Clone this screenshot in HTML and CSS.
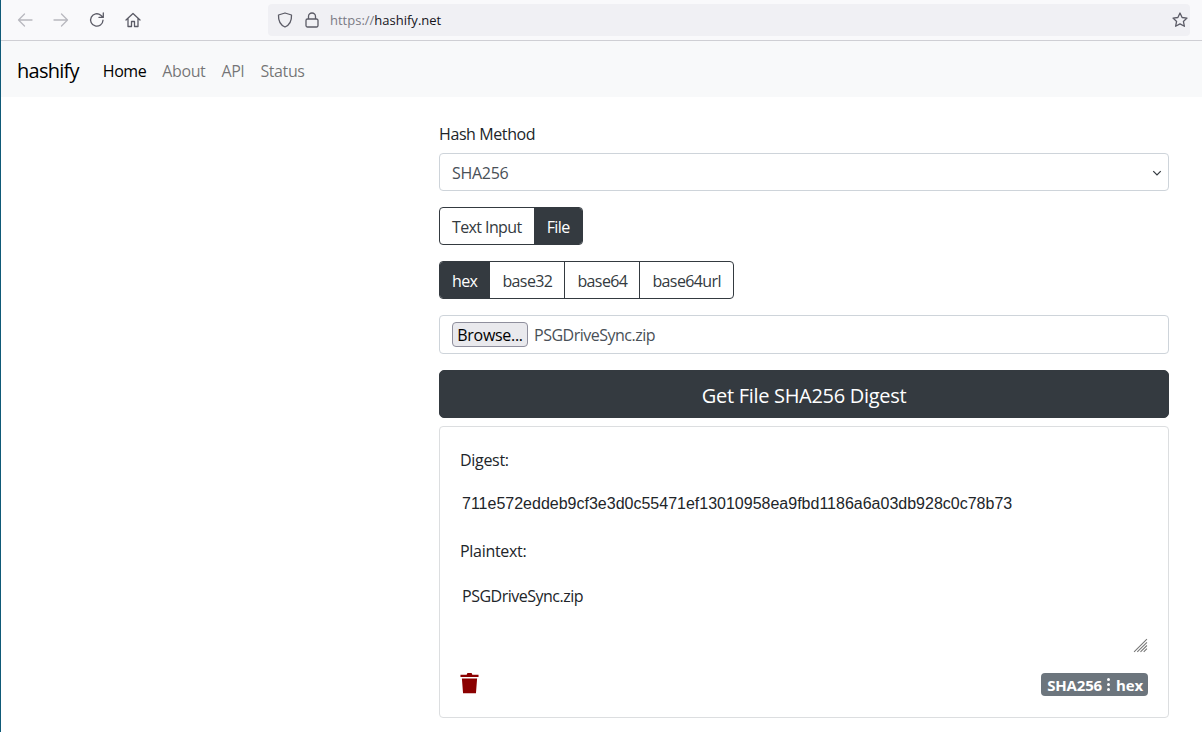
FILE: index.html
```html
<!DOCTYPE html>
<html lang="en">
<head>
<meta charset="utf-8">
<title>hashify</title>
<link rel="stylesheet" href="styles.css">
</head>
<body>
<div class="window">
  <div class="chrome">
    <div class="tools">
      <svg class="ico faint" viewBox="0 0 16 16"><path d="M15 8H1.5M7.5 2 1.5 8l6 6"/></svg>
      <svg class="ico faint" viewBox="0 0 16 16"><path d="M1 8h13.5M8.5 2l6 6-6 6"/></svg>
      <svg class="ico" viewBox="0 0 16 16"><path d="M14 8.2A6.2 6.2 0 1 1 11.8 3.2L14 5.2M14.3 1v4.4H10"/></svg>
      <svg class="ico" viewBox="0 0 16 16"><path d="M1 8 8 1.5 15 8M3 6.5V14.500h3.500V9.500h3V14.500H13V6.500"/></svg>
    </div>
    <div class="urlbar">
      <svg class="ico shield" viewBox="0 0 16 16"><path d="M8 1 14.500 3C14.800 9 12.500 13 8 15 3.500 13 1.200 9 1.500 3Z"/></svg>
      <svg class="ico lock" viewBox="0 0 16 16"><path d="M4.500 7V4.500a3.500 3.500 0 0 1 7 0V7M3.500 7h9a1.500 1.500 0 0 1 1.500 1.500v5a1.500 1.500 0 0 1-1.500 1.500h-9A1.500 1.500 0 0 1 2 13.500v-5A1.500 1.500 0 0 1 3.500 7Z"/></svg>
      <span class="url"><span class="scheme">https://</span>hashify.net</span>
      <svg class="ico star" viewBox="0 0 16 16"><path d="M8 1l2.100 4.500 4.900.6-3.600 3.300 1 4.900L8 11.900l-4.400 2.400 1-4.900L1 6.100l4.900-.6Z"/></svg>
    </div>
  </div>
  <nav class="navbar">
    <a class="brand">hashify</a>
    <a class="navlink active">Home</a>
    <a class="navlink">About</a>
    <a class="navlink">API</a>
    <a class="navlink">Status</a>
  </nav>
  <main class="main">
    <label class="label">Hash Method</label>
    <div class="select">
      <span>SHA256</span>
      <svg class="caret" viewBox="0 0 16 16"><path d="M2 5l6 6 6-6"/></svg>
    </div>
    <div class="btngroup">
      <span class="seg">Text Input</span><span class="seg on">File</span>
    </div>
    <div class="btngroup">
      <span class="seg on">hex</span><span class="seg">base32</span><span class="seg">base64</span><span class="seg">base64url</span>
    </div>
    <div class="filebox">
      <span class="browse">Browse...</span><span class="filename">PSGDriveSync.zip</span>
    </div>
    <button class="submit">Get File SHA256 Digest</button>
    <section class="card">
      <div class="cardlabel">Digest:</div>
      <div class="value digest">711e572eddeb9cf3e3d0c55471ef13010958ea9fbd1186a6a03db928c0c78b73</div>
      <div class="cardlabel second">Plaintext:</div>
      <div class="value plain">PSGDriveSync.zip</div>
      <div class="grip">
        <svg viewBox="0 0 14 14"><path d="M13 1 1 13M13 4 4 13M13 7 7 13M13 10 10 13"/></svg>
      </div>
      <div class="cardfoot">
        <svg class="trash" viewBox="0 0 20 22"><path d="M7 2.200 7.800.5h4.400L13 2.200h6.500v2.600H.5V2.200ZM2 6.300h16L16.800 21.800H3.200Z"/></svg>
        <span class="badge">SHA256<span class="dots"><i></i><i></i><i></i></span>hex</span>
      </div>
    </section>
  </main>
</div>
</body>
</html>
```

FILE: styles.css
```css
* { box-sizing: border-box; }
html, body { margin: 0; height: 100%; background: #fff; }
body { overflow: hidden; font-family: "Open Sans", "Noto Sans", sans-serif; font-size: 16px; line-height: 24px; color: #212529; }
.window { height: 732px; border-left: 1px solid #0f5a78; overflow: hidden; }
.chrome { height: 41px; background: #f9f9fb; border-bottom: 1px solid #cfcfd4; display: flex; align-items: flex-start; padding: 4px 0 0 16px; }
.tools { display: flex; gap: 20px; height: 32px; align-items: center; width: 251px; }
.ico { width: 16px; height: 16px; flex: none; fill: none; stroke: #5b5b66; stroke-width: 1.300; stroke-linejoin: round; stroke-linecap: round; }
.faint { stroke: #b8b8bf; }
.urlbar { width: 922px; height: 32px; background: #f0f0f4; border-radius: 4px; display: flex; align-items: center; padding: 0 2px 0 9px; }
.lock { margin-left: 11px; }
.url { margin-left: 10px; font-size: 13px; color: #15141a; font-family: "Open Sans", sans-serif; }
.scheme { color: #7b7b85; }
.star { margin-left: auto; }
.navbar { height: 56px; background: #f8f9fa; display: flex; align-items: center; padding: 3px 0 0 16px; }
.brand { font-size: 20px; line-height: 30px; color: #000; margin-right: 16px; letter-spacing: -0.750px; }
.navlink { padding: 0 8px; color: rgba(0,0,0,.55); letter-spacing: -0.400px; }
.navlink.active { color: #000; }
.main { width: 730px; margin-left: 438px; padding-top: 25px; }
.label { display: block; height: 24px; margin-bottom: 7px; letter-spacing: -0.400px; }
.select { height: 38px; border: 1px solid #ced4da; border-radius: 4px; padding: 7px 12px 5px; display: flex; justify-content: space-between; align-items: center; color: #495057; letter-spacing: -0.300px; }
.caret { width: 16px; height: 16px; margin-right: -9px; padding: 3px; fill: none; stroke: #343a40; stroke-width: 2; }
.btngroup { display: flex; height: 38px; margin-top: 16px; letter-spacing: -0.600px; width: max-content; border: 1px solid #343a40; border-radius: 4px; overflow: hidden; }
.seg { padding: 7px 12px 5px; border-left: 1px solid #343a40; color: #343a40; }
.seg:first-child { border-left: 0; }
.seg.on { background: #343a40; color: #fff; }
.filebox { height: 39px; margin-top: 16px; border: 1px solid #ced4da; border-radius: 4px; display: flex; align-items: center; padding-left: 12px; color: #495057; letter-spacing: -0.500px; }
.browse { height: 25px; line-height: 25px; width: 76px; text-align: center; background: #e9e9ed; border: 1px solid #8f8f9d; border-radius: 4px; color: #000; margin-right: 6px; letter-spacing: -0.300px; }
.filename { padding-top: 1px; }
.submit { display: block; width: 100%; height: 48px; margin-top: 16px; padding-top: 4px; border: 1px solid #343a40; border-radius: 5px; background: #343a40; color: #fff; font: inherit; font-size: 20px; line-height: 30px; letter-spacing: -0.300px; }
.card { height: 292px; margin-top: 8px; border: 1px solid #dcdee0; border-radius: 4px; padding: 21px 20px 0; color: #212529; display: flex; flex-direction: column; }
.cardlabel { letter-spacing: -0.300px; }
.cardlabel.second { margin-top: 23px; }
.value { font-family: "Liberation Sans", Arial, sans-serif; margin-top: 20px; padding-left: 2px; white-space: nowrap; color: #212529; }
.plain { font-family: "Open Sans", sans-serif; letter-spacing: -0.500px; margin-top: 21px; }
.grip { margin-top: 30px; height: 15px; display: flex; justify-content: flex-end; margin-right: 0; }
.grip svg { width: 15px; height: 15px; fill: none; stroke: #777; stroke-width: 1; }
.cardfoot { display: flex; justify-content: space-between; align-items: flex-start; margin-top: 19px; }
.trash { width: 19px; height: 22px; fill: #8b0000; }
.badge { display: inline-flex; align-items: center; height: 23px; margin-top: 1px; background: #6c757d; color: #fff; border-radius: 4px; padding: 0 5px 0 6px; font-size: 15px; font-weight: 700; letter-spacing: -0.150px; }
.dots { display: inline-flex; flex-direction: column; gap: 2px; margin: 0 6px 0 5px; }
.dots i { width: 3px; height: 3px; background: #fff; border-radius: 50%; display: block; }
```
